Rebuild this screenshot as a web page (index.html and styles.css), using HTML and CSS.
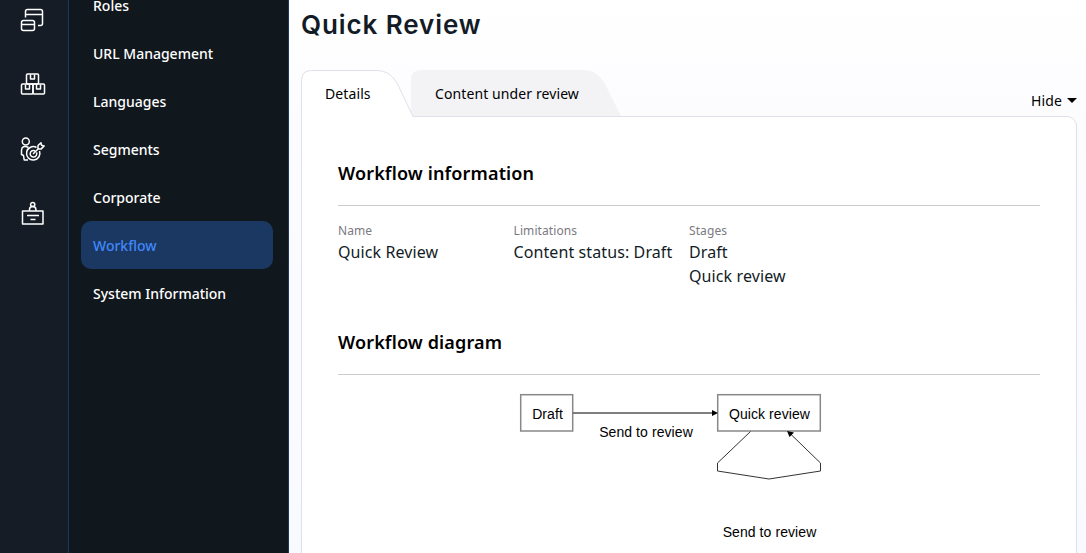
FILE: index.html
```
<!DOCTYPE html>
<html lang="en">
<head>
<meta charset="utf-8">
<title>Quick Review</title>
<link rel="stylesheet" href="styles.css">
</head>
<body>
<div class="app">
  <nav class="rail">
    <svg class="rail-icon" width="26" height="26" viewBox="0 0 26 26"><path d="M5.500 9.500V3.500q0-2 2-2h13q2 0 2 2v12q0 2-2 2h-2.500M5.500 6.500h17"/><rect x="1.500" y="12.500" width="13" height="10" rx="2"/><path d="M1.500 16.500h13"/></svg>
    <svg class="rail-icon" width="26" height="26" viewBox="0 0 26 26"><rect x="6.500" y="1" width="12" height="10" rx="1"/><rect x="1.500" y="11" width="11.500" height="10" rx="1"/><rect x="13" y="11" width="11.500" height="10" rx="1"/><path d="M10.500 1.500v4.500h4V1.500M5.500 11.500v4.500h4V11.500M16.500 11.500v4.500h4V11.500"/></svg>
    <svg class="rail-icon" width="26" height="26" viewBox="0 0 26 26"><circle cx="5.800" cy="4.500" r="3.500"/><path d="M8.500 10.500c-4-2-7-1-7 3v4l2 1 .7 4.500H8M16.500 10.500a6.700 6.700 0 1 0 3 3.500M15 13.800a3.300 3.300 0 1 0 1.500 1.600M13 17l6-6M18 12V8.500l3-2.800.5 2.500 2.700.7-3 3Z"/></svg>
    <svg class="rail-icon" width="26" height="26" viewBox="0 0 26 26"><rect x="2.500" y="9" width="20.500" height="13"/><circle cx="12.700" cy="2.500" r="2.100"/><path d="M9.500 9V7.500q0-3 3.200-3t3.200 3V9M7 13.500h12M10.500 17.500h5"/></svg>
  </nav>
  <nav class="menu">
    <a class="menu-item">Roles</a>
    <a class="menu-item">URL Management</a>
    <a class="menu-item">Languages</a>
    <a class="menu-item">Segments</a>
    <a class="menu-item">Corporate</a>
    <a class="menu-item menu-item-active">Workflow</a>
    <a class="menu-item">System Information</a>
  </nav>
  <main class="main">
    <h1 class="title">Quick Review</h1>
    <div class="tabbar">
      <div class="tab tab-details">
        <svg class="tab-shape" width="113" height="48" viewBox="0 0 113 48"><path class="tab-open" d="M.5 48V10.500q0-10 10-10H75C86 .5 92 6 97 15l15 31.500V48Z"/><path class="tab-line" d="M.5 48V10.500q0-10 10-10H75C86 .5 92 6 97 15l15 31.500"/></svg>
        <span class="tab-label">Details</span>
      </div>
      <div class="tab tab-content">
        <svg class="tab-shape" width="210" height="46" viewBox="0 0 210 46"><path class="tab-closed" d="M2 46L0 42V10Q0 0 10 0H171C183 0 189 6 194 14l16 32Z"/></svg>
        <span class="tab-label">Content under review</span>
      </div>
      <div class="hide">Hide <span class="caret"></span></div>
    </div>
    <section class="card">
      <h2 class="heading">Workflow information</h2>
      <div class="info">
        <div><div class="label">Name</div><div class="value">Quick Review</div></div>
        <div><div class="label">Limitations</div><div class="value">Content status: Draft</div></div>
        <div><div class="label">Stages</div><div class="value">Draft</div><div class="value">Quick review</div></div>
      </div>
      <h2 class="heading">Workflow diagram</h2>
      <svg class="diagram" width="702" height="178" viewBox="338 375 702 178">
        <g class="node"><rect x="520.700" y="394.700" width="52" height="36.300"/><rect x="717.700" y="394.700" width="102.600" height="36.300"/></g>
        <path class="edge-main" d="M573 413H713"/>
        <path class="edge" d="M750.500 431.500L717.500 463V471L769 479L820.500 471V463L789 432.500"/>
        <path d="M718 413l-6-3v6ZM787 431l2.500 6 4.500-4.500Z"/>
        <g class="diagram-text"><text x="547.500" y="419">Draft</text><text x="769.500" y="419">Quick review</text><text x="646" y="437">Send to review</text><text x="769.500" y="537">Send to review</text></g>
      </svg>
    </section>
  </main>
</div>
</body>
</html>
```
FILE: styles.css
```
* { box-sizing: border-box; }
body { margin: 0; font-family: "Noto Sans", sans-serif; color: #131c26; }
.app { display: flex; height: 553px; overflow: hidden; }
.rail { width: 69px; flex: none; background: #151c26; border-right: 1px solid #1a3763; padding: 8px 0 0 20px; display: flex; flex-direction: column; gap: 38.500px; }
.rail-icon { flex: none; overflow: visible; fill: none; stroke: #fff; stroke-width: 1.500; stroke-linejoin: round; }
.menu { width: 220px; flex: none; background: #10171d; border-right: 1px solid #1a3763; padding: 0 15px 0 12px; display: flex; flex-direction: column; margin-top: -19px; }
.menu-item { height: 48px; line-height: 50px; padding-left: 12px; border-radius: 10px; color: #fff; font-size: 14px; font-weight: 500; white-space: nowrap; }
.menu-item-active { background: #1a3862; color: #4088fb; }
.main { flex: 1; min-width: 0; padding: 0 9px 0 12px; background: linear-gradient(#fff, #fcfcff 120px, #f9faff); }
.title { margin: 5px 0 0; height: 65px; font-family: Inter, sans-serif; font-size: 26px; line-height: 39px; font-weight: 600; letter-spacing: 0.900px; white-space: nowrap; }
.tabbar { display: flex; height: 46px; color: #000; font-size: 14px; letter-spacing: 0.100px; }
.tab { position: relative; z-index: 1; height: 46px; padding: 14px 24px 0; line-height: 20px; white-space: nowrap; }
.tab-details { width: 110px; }
.tab-content { width: 210px; z-index: 0; }
.tab-shape { position: absolute; left: 0; top: 0; }
.tab-label { position: relative; }
.tab-open { fill: #fff; }
.tab-line { fill: none; stroke: #e0e0e8; }
.tab-closed { fill: #f3f3f6; }
.hide { margin-left: auto; padding-top: 21px; line-height: 20px; display: flex; gap: 5px; }
.caret { margin-top: 7px; width: 10px; height: 5px; background: #000; clip-path: polygon(0 0, 100% 0, 50% 100%); }
.card { height: 480px; padding: 36px; background: #fff; border: 1px solid #e0e0e8; border-radius: 0 10px 0 0; }
.heading { margin: 0; height: 53px; padding-top: 8px; border-bottom: 1px solid #ccc; color: #000; font-size: 18px; line-height: 24px; font-weight: 600; letter-spacing: 0.140px; white-space: nowrap; }
.info { display: grid; grid-template-columns: repeat(4, 1fr); height: 116px; padding-top: 16px; letter-spacing: 0.100px; white-space: nowrap; }
.label { font-size: 12px; line-height: 18px; color: #7a7a80; }
.value { font-size: 16px; line-height: 24px; }
.diagram { display: block; }
.node { fill: none; stroke: #888; stroke-width: 1.500; }
.edge-main { fill: none; stroke: #555; stroke-width: 1.300; }
.edge { fill: none; stroke: #333; stroke-width: 1; }
.diagram-text { font: 14px "Liberation Sans", Arial, sans-serif; text-anchor: middle; letter-spacing: 0.080px; }
```
